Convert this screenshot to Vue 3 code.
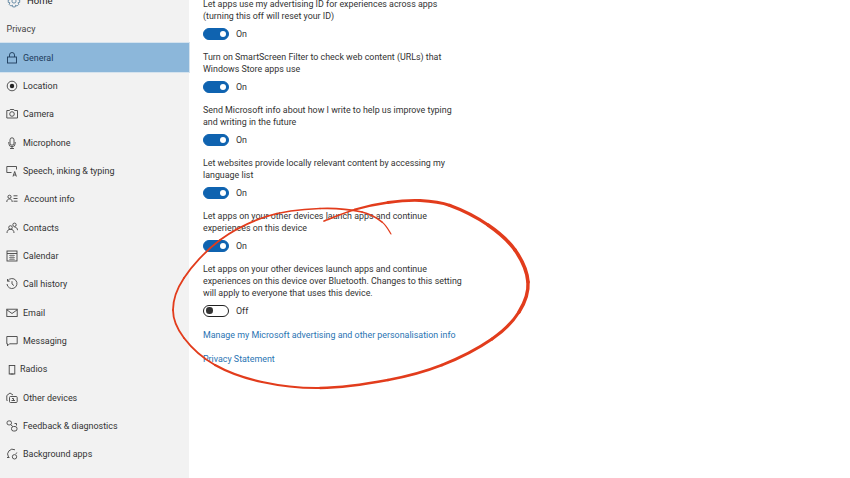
<script setup>
const items = [
  { n: 'General', i: 'lock', active: true },
  { n: 'Location', i: 'loc' },
  { n: 'Camera', i: 'cam' },
  { n: 'Microphone', i: 'mic' },
  { n: 'Speech, inking & typing', i: 'speech' },
  { n: 'Account info', i: 'acct', cls: 'shift1' },
  { n: 'Contacts', i: 'contacts' },
  { n: 'Calendar', i: 'cal' },
  { n: 'Call history', i: 'hist' },
  { n: 'Email', i: 'mail' },
  { n: 'Messaging', i: 'msg' },
  { n: 'Radios', i: 'radio', cls: 'shift3' },
  { n: 'Other devices', i: 'dev' },
  { n: 'Feedback & diagnostics', i: 'fb' },
  { n: 'Background apps', i: 'bg' }
]
const settings = [
  { lines: ['Let apps use my advertising ID for experiences across apps', '(turning this off will reset your ID)'], on: true },
  { lines: ['Turn on SmartScreen Filter to check web content (URLs) that', 'Windows Store apps use'], on: true },
  { lines: ['Send Microsoft info about how I write to help us improve typing', 'and writing in the future'], on: true },
  { lines: ['Let websites provide locally relevant content by accessing my', 'language list'], on: true },
  { lines: ['Let apps on your other devices launch apps and continue', 'experiences on this device'], on: true },
  { lines: ['Let apps on your other devices launch apps and continue', 'experiences on this device over Bluetooth. Changes to this setting', 'will apply to everyone that uses this device.'], on: false }
]
const pts = [
  [324,221,1.4],[355,209.500,2],[388,202.500,2.6],[420,200.500,3],[450,205.500,3.2],[488,225,3.4],[515,250,3.6],[528,282,3.6],
  [519,312,3.2],[492,339,3],[442,365,2.6],[388,380,2.4],[320,388,2.2],[262,382,2.2],[215,365,2],[184,338,1.8],
  [173,310,1.8],[184,278,1.8],[220,240,1.8],[268,216,1.7],[320,208.500,1.6],[362,212,1.6],[382,222,1.4],[391,234,.9]
]
const f = n => n.toFixed(1)
const scribble = pts.slice(0, -1).map((b, i) => {
  const a = pts[Math.max(i - 1, 0)], c = pts[i + 1], e = pts[Math.min(i + 2, pts.length - 1)]
  return {
    w: (b[2] + c[2]) / 2,
    d: `M${b[0]} ${b[1]} C${f(b[0] + (c[0] - a[0]) / 6)} ${f(b[1] + (c[1] - a[1]) / 6)} ${f(c[0] - (e[0] - b[0]) / 6)} ${f(c[1] - (e[1] - b[1]) / 6)} ${c[0]} ${c[1]}`
  }
})
</script>

<template>
  <div class="page">
    <aside class="side">
      <div class="row home">
        <svg class="ic big" viewBox="0 0 16 16"><path d="M6.6 1.5h2.8l.4 2 1.7-.9 2 2-1 1.7 2 .5v2.8l-2 .4 1 1.8-2 2-1.7-1-.4 2H6.600l-.4-2-1.800 1-2-2 1-1.800-2-.4V6.800l2-.5-1-1.700 2-2 1.800.9z" /><circle cx="8" cy="8" r="2.400" /></svg>
        <span>Home</span>
      </div>
      <div class="row head">Privacy</div>
      <div v-for="it in items" :key="it.n" class="row" :class="[{ active: it.active }, it.cls]">
        <svg class="ic" viewBox="0 0 12 12">
          <template v-if="it.i === 'lock'"><rect x="1.500" y="5" width="9" height="6" /><path d="M3.500 5V3a2.500 2.500 0 0 1 5 0v2" /></template>
          <template v-else-if="it.i === 'loc'"><circle cx="6" cy="6" r="4.800" /><circle class="fill" cx="6" cy="6" r="2.200" /></template>
          <template v-else-if="it.i === 'cam'"><path d="M.8 2.500h2.700l.7-1h3.600l.7 1h3v7.500H.8z" /><circle cx="6" cy="6" r="2.300" /></template>
          <template v-else-if="it.i === 'mic'"><rect x="4" y=".8" width="4" height="7.400" rx="2" /><path d="M2.800 5v1.500a3.200 3.200 0 0 0 6.400 0V5M6 9.700v1.800M4 11.500h4" /></template>
          <template v-else-if="it.i === 'speech'"><path d="M5.500 7.500H.8V1.500h9.700v3" /><path d="M7 11.500l1.700-5 1.700 5M7.500 10h2.500" /></template>
          <template v-else-if="it.i === 'acct'"><circle cx="3.500" cy="3.800" r="1.600" /><path d="M.8 9c0-2 1-3 2.700-3s2.700 1 2.700 3M7.500 2.800h4M7.500 5.500h4M7.500 8.200h4" /></template>
          <template v-else-if="it.i === 'contacts'"><circle cx="4.500" cy="5.500" r="1.800" /><path d="M1 11c0-2.500 1.300-3.700 3.500-3.700S8 8.500 8 11" /><circle cx="8.500" cy="2.800" r="1.700" /><path d="M8.500 5.200c1.800 0 3 1 3 3" /></template>
          <template v-else-if="it.i === 'cal'"><rect x="1" y="1" width="10" height="10" /><path d="M1 3.500h10" /><path d="M3 5.500h6M3 7.500h6M3 9.300h6M5 4.500v5.500M7 4.500v5.500" class="thin" /></template>
          <template v-else-if="it.i === 'hist'"><path d="M1.800 2.800A5 5 0 1 1 1 6" /><path d="M1.500 1v2.200h2.200M6 3.200V6l2 1.600" /></template>
          <template v-else-if="it.i === 'mail'"><rect x=".8" y="2.200" width="10.400" height="7.300" /><path d="M.8 2.800L6 6.500l5.200-3.700" /></template>
          <template v-else-if="it.i === 'msg'"><path d="M.8 1.500h10.400v7.300H3.500L1.500 10.800V8.800H.8z" /></template>
          <template v-else-if="it.i === 'radio'"><rect x="3.200" y="2.500" width="5.600" height="8.500" /><path d="M4.500 11h3" /></template>
          <template v-else-if="it.i === 'dev'"><path d="M1.500 8.500H.8V3.500L4 1l3 2" /><rect x="3.500" y="4.500" width="7.700" height="6" rx="1" /><path d="M5.500 8.500h3.500M6 6.500h1.500v2" /></template>
          <template v-else-if="it.i === 'fb'"><rect x="1" y=".9" width="4.500" height="4" rx="1.800" /><rect x="5.500" y="6.500" width="5.500" height="4.500" rx="2" /><path d="M5 5l1.800 1.500M8.500 3.500h2v2" /></template>
          <template v-else><path d="M2.500 9A5 5 0 0 1 9 1.800M10.800 4.500a5 5 0 0 1-1 1.500" /><circle cx="8.500" cy="8.800" r="2.200" /><path d="M1 9.500h2.500" /></template>
        </svg>
        <span>{{ it.n }}</span>
      </div>
    </aside>
    <main class="main">
      <section v-for="(s, i) in settings" :key="i" class="setting">
        <p v-for="l in s.lines" :key="l" class="line">{{ l }}</p>
        <div class="state">
          <span class="toggle" :class="{ on: s.on }"><i></i></span>
          <span>{{ s.on ? 'On' : 'Off' }}</span>
        </div>
      </section>
      <a class="link first">Manage my Microsoft advertising and other personalisation info</a>
      <a class="link">Privacy Statement</a>
    </main>
    <svg class="scribble" width="850" height="478" viewBox="0 0 850 478"><path v-for="(p, i) in scribble" :key="i" :d="p.d" :stroke-width="p.w" /></svg>
  </div>
</template>

<style>
html, body { margin: 0; background: #fff; overflow: hidden; }
</style>

<style scoped>
.page {
  position: relative;
  display: flex;
  width: 850px;
  height: 478px;
  overflow: hidden;
  background: #fff;
  font-family: Roboto, "Open Sans", sans-serif;
  font-size: 8.900px;
  color: #333;
}
.side {
  flex: none;
  width: 189px;
  height: 520px;
  margin-top: -13.300px;
  background: #f2f2f2;
  font-size: 8.950px;
}
.row {
  display: flex;
  align-items: center;
  gap: 5px;
  height: 28.350px;
  padding-left: 6px;
  box-sizing: border-box;
}
.row.home { font-size: 9.500px; color: #222; gap: 6px; }
.row.head { padding-left: 6.500px; color: #444; }
.row.active { background: #8cb7da; color: #1d3b5a; box-shadow: 0 0 0 1px #d5e3ee; }
.row.shift1 { gap: 6px; }
.row.shift3 { gap: 2px; }
.ic {
  flex: none;
  width: 12px;
  height: 12px;
  fill: none;
  stroke: #444;
  stroke-width: .9;
}
.ic.big { width: 14px; height: 14px; stroke: #4b7696; margin-left: 1px; }
.ic .fill { fill: #222; stroke: none; }
.ic .thin { stroke-width: .5; }
.active .ic { stroke: #1d3b5a; }
.main {
  padding: 0 0 0 14px;
  margin-top: -.6px;
}
.setting { margin-bottom: 12.400px; }
.line { margin: 0; line-height: 11.800px; white-space: nowrap; color: #333; }
.state {
  display: flex;
  align-items: center;
  gap: 7px;
  height: 12px;
  margin-top: 5px;
}
.toggle {
  display: flex;
  align-items: center;
  width: 26px;
  height: 12px;
  box-sizing: border-box;
  border-radius: 6px;
  border: 1.300px solid #222;
  padding: 0 2px;
  background: #fff;
}
.toggle i { width: 6.500px; height: 6.500px; border-radius: 50%; background: #333; }
.toggle.on { background: #0f63b0; border-color: #0f63b0; justify-content: flex-end; }
.toggle.on i { background: #fff; }
.link { display: block; color: #2a74b3; line-height: 12px; }
.link.first { margin-top: -.4px; margin-bottom: 12px; }
.scribble { position: absolute; inset: 0; pointer-events: none; }
.scribble path { fill: none; stroke: #e23c1c; stroke-linecap: round; }
</style>
